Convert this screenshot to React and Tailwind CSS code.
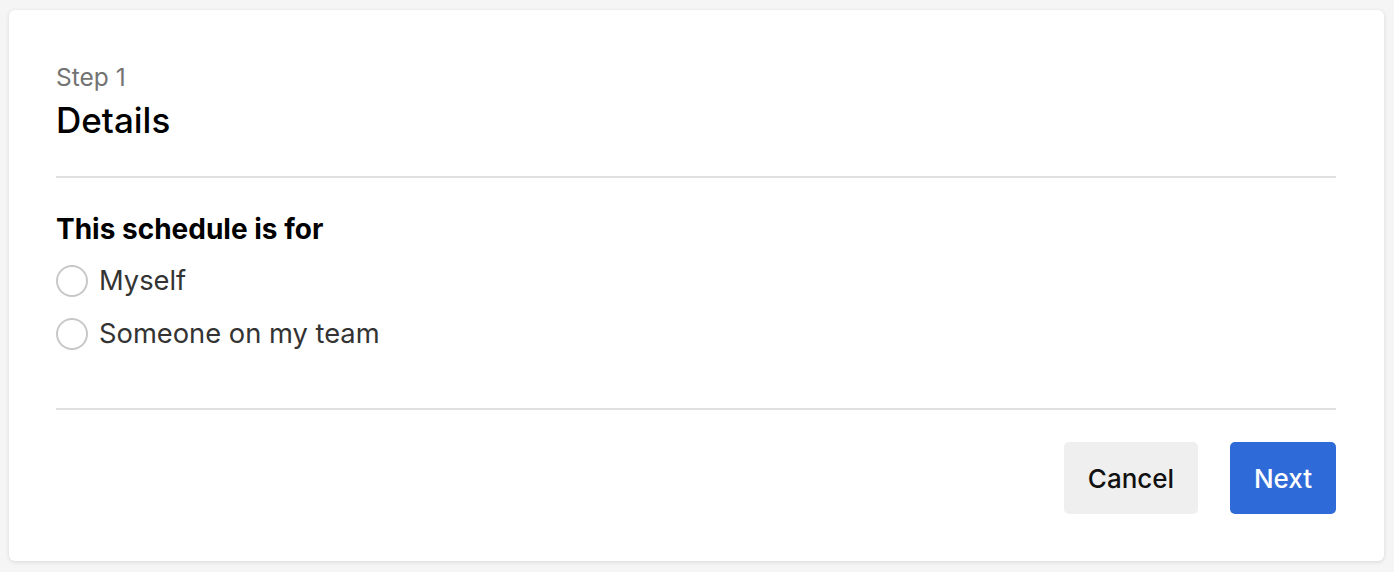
const options = ['Myself', 'Someone on my team'];

const Radio = ({ label }) => (
  <label className="flex items-center h-[53px] gap-[11px] cursor-pointer">
    <span className="w-[32px] h-[32px] rounded-full border-2 border-[#c8c8c8] bg-white shrink-0" />
    <span className="text-[27.3px] leading-[32px] text-[#333333]">{label}</span>
  </label>
);

const App = () => {
  return (
    <div
      className="min-h-[572px] bg-[#f5f5f5] p-[10px] pl-[9px]"
      style={{ fontFamily: 'Inter, "Noto Sans", sans-serif' }}
    >
      <div className="bg-white rounded-[6px] shadow-[0_1px_4px_rgba(0,0,0,0.12)] pl-[47px] pr-[48px] pt-[53px] pb-[47px] w-[1375px] h-[551px]">
        <div className="text-[24.5px] leading-[28px] text-[#737373]">Step 1</div>
        <h1 className="mt-[11px] text-[35px] leading-[36px] font-medium text-black">Details</h1>

        <div className="mt-[38px] h-[2px] bg-[#e0e0e0]" />

        <h2 className="mt-[35px] text-[28px] leading-[32px] font-bold text-black">This schedule is for</h2>
        <div className="mt-[9px] flex flex-col">
          {options.map((opt) => (
            <Radio key={opt} label={opt} />
          ))}
        </div>

        <div className="mt-[48px] h-[2px] bg-[#e0e0e0]" />

        <div className="mt-[32px] flex justify-end gap-[32px]">
          <button className="h-[72px] w-[134px] rounded-[5px] bg-[#efefef] text-[26px] font-medium text-[#111111]">
            Cancel
          </button>
          <button className="h-[72px] w-[106px] rounded-[5px] bg-[#2f6bd8] text-[26px] font-medium text-white">
            Next
          </button>
        </div>
      </div>
    </div>
  );
};

export default App;
